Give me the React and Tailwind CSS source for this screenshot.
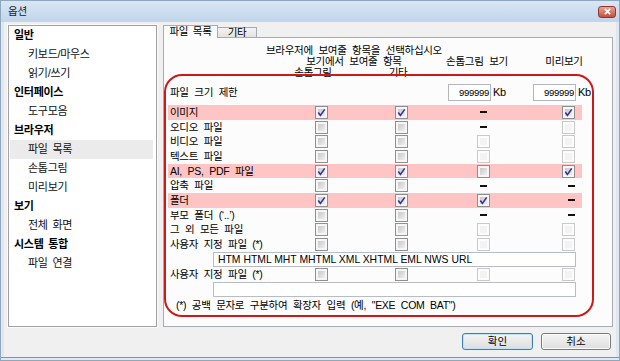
import React from 'react';

const FONT = "font-['Liberation_Sans','Noto_Sans_CJK_KR',sans-serif]";

const tree = [
  { t: '일반', head: true },
  { t: '키보드/마우스' },
  { t: '읽기/쓰기' },
  { t: '인터페이스', head: true },
  { t: '도구모음' },
  { t: '브라우저', head: true },
  { t: '파일 목록', sel: true },
  { t: '손톱그림' },
  { t: '미리보기' },
  { t: '보기', head: true },
  { t: '전체 화면' },
  { t: '시스템 통합', head: true },
  { t: '파일 연결' },
];

// c = checked, u = unchecked, l = light unchecked, - = not available
const rows = [
  { label: '이미지', v: ['c', 'c', '-', 'c'], hi: true },
  { label: '오디오 파일', v: ['u', 'u', '-', 'l'] },
  { label: '비디오 파일', v: ['u', 'u', 'l', 'l'] },
  { label: '텍스트 파일', v: ['u', 'u', 'l', 'l'] },
  { label: 'AI, PS, PDF 파일', v: ['c', 'c', 'u', 'c'], hi: true },
  { label: '압축 파일', v: ['u', 'u', '-', '-'] },
  { label: '폴더', v: ['c', 'c', 'c', '-'], hi: true },
  { label: '부모 폴더 (‘..’)', v: ['u', 'u', '-', '-'] },
  { label: '그 외 모든 파일', v: ['u', 'u', 'l', 'l'] },
  { label: '사용자 지정 파일 (*)', v: ['u', 'u', 'l', 'l'], input: 'HTM HTML MHT MHTML XML XHTML EML NWS URL' },
  { label: '사용자 지정 파일 (*)', v: ['u', 'u', 'l', 'l'], input: '' },
];

function Box({ v }) {
  if (v === '-') return <span className="block w-[7px] h-[2px] bg-[#111]" />;
  const light = v === 'l';
  return (
    <span
      className={`relative block w-[13px] h-[13px] border ${
        light ? 'border-[#c9c9c9] bg-[#fcfcfc]' : 'border-[#8f8f8f] bg-[#f6f6f6]'
      }`}
    >
      <span
        className={`absolute inset-[2px] ${
          light ? 'bg-[#f3f3f3]' : 'bg-linear-to-br from-[#c9c9c9] to-[#efefef]'
        }`}
      />
      {v === 'c' && (
        <svg viewBox="0 0 13 13" className="absolute -left-px -top-px w-[13px] h-[13px]">
          <path d="M3.3 6.6 L5.4 9.4 L9.7 3.4" fill="none" stroke="#3b2f9e" strokeWidth="1.6" />
        </svg>
      )}
    </span>
  );
}

function Cells({ v }) {
  return (
    <>
      <div className="w-[80px] shrink-0 flex justify-center items-center"><Box v={v[0]} /></div>
      <div className="w-[80px] shrink-0 flex justify-center items-center"><Box v={v[1]} /></div>
      <div className="w-[84px] shrink-0 flex justify-center items-center"><Box v={v[2]} /></div>
      <div className="w-[57px] shrink-0 flex justify-end items-center pr-[7px]"><Box v={v[3]} /></div>
    </>
  );
}

function SizeInput() {
  return (
    <div className="flex items-center">
      <div className="w-[43px] h-[17px] border border-[#b3b6bd] bg-white flex items-center justify-end pr-[1px] text-[9.5px] tracking-[-0.3px] text-black">
        999999
      </div>
      <span className="ml-[2px] text-[11px] text-black">Kb</span>
    </div>
  );
}

export default function App() {
  return (
    <div className={`${FONT} w-[620px] h-[361px] bg-[#dfe8f2] border border-[#8fa6bf] flex flex-col text-black overflow-hidden`}>
      {/* title bar */}
      <div className="h-[21px] bg-linear-to-b from-[#d9e6f4] to-[#c0d5eb] flex items-center justify-between pl-[7px] pr-[3px]">
        <span className="text-[10.5px] text-[#1b1b1b] tracking-[-0.2px]">옵션</span>
        <div className="w-[18px] h-[12px] rounded-[3px] border border-[#8c3a2f] bg-linear-to-b from-[#e2a497] to-[#c4503e] flex items-center justify-center">
          <svg viewBox="0 0 10 8" className="w-[9px] h-[7px]">
            <path d="M2 1 L8 7 M8 1 L2 7" stroke="#fff" strokeWidth="1.8" />
          </svg>
        </div>
      </div>

      {/* body */}
      <div className="mx-[3px] h-[335px] bg-[#f0f0f0] flex flex-col">
        <div className="flex pl-[4px] pt-[3px] gap-[6px]">
          {/* tree */}
          <div className="w-[149px] h-[302px] border border-[#a3a3a3] bg-white shadow-[0_0_0_1px_#fafafa] pl-[1px] pr-[3px] text-[11px] tracking-[-0.3px] [word-spacing:2px]">
            {tree.map((it, i) => (
              <div
                key={i}
                className={`h-[19px] flex items-center ${it.head ? 'pl-[4px] font-bold' : 'pl-[18px] text-[#111]'} ${
                  it.sel ? 'bg-[#ebebeb]' : ''
                }`}
              >
                {it.t}
              </div>
            ))}
          </div>

          {/* tabs */}
          <div className="relative w-[450px] flex flex-col">
            <div className="flex items-end h-[12px] text-[10.5px] tracking-[-0.3px] [word-spacing:2px]">
              <div className="relative z-10 h-[13px] -mb-px w-[55px] bg-[#fcfcfc] border border-b-0 border-[#a8abb2] flex items-center justify-center">
                파일 목록
              </div>
              <div className="h-[10px] w-[39px] border border-l-0 border-b-0 border-[#a8abb2] bg-linear-to-b from-[#f3f3f3] to-[#e3e3e3] flex items-center justify-center">
                기타
              </div>
            </div>
            <div className="h-[290px] border border-[#a8abb2] bg-[#fcfcfc] pt-[7px] text-[10.5px] tracking-[-0.3px] [word-spacing:3px] leading-[11px]">
              <div className="text-center pr-[68px]">브라우저에 보여줄 항목을 선택하십시오</div>
              <div className="flex">
                <div className="w-[117px] shrink-0" />
                <div className="w-[160px] shrink-0 text-center pr-[14px]">보기에서 보여줄 항목</div>
                <div className="w-[84px] shrink-0 text-center pr-[12px]">손톱그림 보기</div>
                <div className="w-[80px] shrink-0 text-center pr-[2px]">미리보기</div>
              </div>
              <div className="flex">
                <div className="w-[117px] shrink-0" />
                <div className="w-[80px] shrink-0 text-center pr-[16px]">손톱그림</div>
                <div className="w-[80px] shrink-0 text-center pr-[6px]">기타</div>
              </div>

              <div className="ml-[4px] mt-[6px] h-[17px] flex items-center">
                <div className="w-[273px] shrink-0 pl-[2px]">파일 크기 제한</div>
                <div className="w-[84px] shrink-0 pl-[7px]"><SizeInput /></div>
                <div className="pl-[8px]"><SizeInput /></div>
              </div>

              <div className="mt-[4px] ml-[4px]">
                {rows.map((r, i) => (
                  <React.Fragment key={i}>
                    <div className={`w-[414px] h-[14.7px] flex items-center ${r.hi ? 'bg-[#ffc4c4]' : ''}`}>
                      <div className="w-[113px] shrink-0 pl-[2px] whitespace-nowrap">{r.label}</div>
                      <Cells v={r.v} />
                    </div>
                    {r.input !== undefined && (
                      <div className="ml-[45px] w-[363px] h-[15px] border border-[#b9bcc3] bg-white flex items-center pl-[4px] text-[10.4px] tracking-normal [word-spacing:0px]">
                        {r.input}
                      </div>
                    )}
                  </React.Fragment>
                ))}
                <div className="mt-[1px] h-[16px] flex items-center pl-[8px] whitespace-nowrap">
                  (*) 공백 문자로 구분하여 확장자 입력 (예, "EXE COM BAT")
                </div>
              </div>
            </div>

            {/* red annotation */}
            <div className="absolute left-[1px] top-[49px] w-[430px] h-[243px] border-2 border-[#cc1a1a] rounded-[18px] pointer-events-none" />
          </div>
        </div>

        {/* buttons */}
        <div className="flex justify-end gap-[8px] pr-[5px] mt-[6px]">
          <button className="w-[71px] h-[17px] rounded-[3px] border border-[#3d7fb5] bg-linear-to-b from-[#f4f4f4] to-[#dedede] shadow-[inset_0_0_0_1px_#bfe3f8] text-[10.5px] leading-none">
            확인
          </button>
          <button className="w-[70px] h-[17px] rounded-[3px] border border-[#7a7a7a] bg-linear-to-b from-[#f4f4f4] to-[#dedede] shadow-[inset_0_0_0_1px_#fbfbfb] text-[10.5px] leading-none">
            취소
          </button>
        </div>
      </div>
      <div className="flex-1 border-t border-[#46a6dd]" />
    </div>
  );
}
